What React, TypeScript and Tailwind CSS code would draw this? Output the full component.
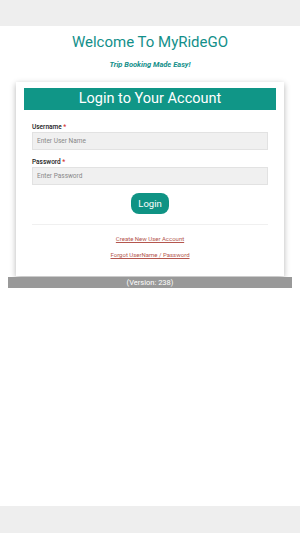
import React, { useState } from "react";

const App: React.FC = () => {
  const [username, setUsername] = useState("");
  const [password, setPassword] = useState("");

  return (
    <div className="flex min-h-[533px] w-full flex-col bg-white font-['Roboto',sans-serif]">
      <div className="h-[26px] bg-[#eeeeee]" />
      <div className="flex flex-1 flex-col items-center">
        <h1 className="mt-[7px] text-center text-[15px] leading-[18px] text-[#138f8a]">
          Welcome To MyRideGO
        </h1>
        <p className="mt-[9px] text-center text-[7.5px] font-bold italic leading-[9px] text-[#138f8a]">
          Trip Booking Made Easy!
        </p>
        <div className="mt-[13px] w-[268px] bg-white px-2 pb-[17px] pt-[6px] shadow-[0_2px_6px_rgba(0,0,0,0.3)]">
          <div className="flex h-[22px] items-center justify-center bg-[#109687]">
            <h2 className="text-[14.5px] leading-[18px] text-white">Login to Your Account</h2>
          </div>
          <div className="px-2 pt-[13px]">
            <label className="block text-[6.5px] font-medium leading-[8px] text-[#222]">
              Username <span className="text-[#d32f2f]">*</span>
            </label>
            <input
              type="text"
              value={username}
              onChange={(e) => setUsername(e.target.value)}
              placeholder="Enter User Name"
              className="mt-[1px] block h-[18px] w-full border border-[#e2e2e2] bg-[#f0f0f0] px-[4px] text-[6.5px] text-[#333] outline-none placeholder:text-[#888]"
            />
            <label className="mt-[8px] block text-[6.5px] font-medium leading-[8px] text-[#222]">
              Password <span className="text-[#d32f2f]">*</span>
            </label>
            <input
              type="password"
              value={password}
              onChange={(e) => setPassword(e.target.value)}
              placeholder="Enter Password"
              className="mt-[1px] block h-[18px] w-full border border-[#e2e2e2] bg-[#f0f0f0] px-[4px] text-[6.5px] text-[#333] outline-none placeholder:text-[#888]"
            />
            <div className="mt-[8px] flex justify-center">
              <button className="h-[21px] w-[38px] rounded-[8px] bg-[#0f9384] text-[9.5px] leading-none text-white">
                Login
              </button>
            </div>
            <div className="mt-[10px] border-t border-[#f0f0f0]" />
            <div className="mt-[10px] flex flex-col items-center gap-[8px]">
              <a href="#" className="text-[6px] leading-[8px] text-[#b4564e] underline">
                Create New User Account
              </a>
              <a href="#" className="text-[6px] leading-[8px] text-[#b4564e] underline">
                Forgot UserName / Password
              </a>
            </div>
          </div>
        </div>
        <div className="mt-[1px] flex h-[11px] w-[284px] items-center justify-center bg-[#999999] text-[7.5px] leading-none text-white">
          (Version: 238)
        </div>
      </div>
      <div className="h-[27px] bg-[#eeeeee]" />
    </div>
  );
};

export default App;
